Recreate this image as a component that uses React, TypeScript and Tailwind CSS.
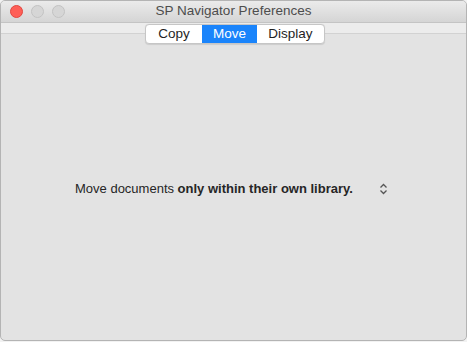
import React from "react";

const segments = ["Copy", "Move", "Display"];

function TrafficLights() {
  return (
    <div className="flex items-center gap-[8px] pl-[9px]">
      <span className="w-[13px] h-[13px] rounded-full bg-[#fe5f57] border border-[#e2463f]" />
      <span className="w-[13px] h-[13px] rounded-full bg-[#d6d6d6] border border-[#c2c2c2]" />
      <span className="w-[13px] h-[13px] rounded-full bg-[#d6d6d6] border border-[#c2c2c2]" />
    </div>
  );
}

export default function App() {
  return (
    <div
      className="w-[467px] h-[342px] bg-[#f2f2f2] overflow-hidden"
      style={{ fontFamily: '"Liberation Sans", Arial, sans-serif' }}
    >
      <div className="w-[467px] h-[341px] rounded-[5px] border border-[#b4b4b4] bg-[#e3e3e3] flex flex-col overflow-hidden">
        {/* title bar */}
        <div className="relative h-[22px] shrink-0 flex items-center bg-gradient-to-b from-[#ebebeb] to-[#d5d5d5] border-b border-[#c4c4c4]">
          <TrafficLights />
          <div className="absolute inset-0 flex items-center justify-center text-[13.5px] text-[#4d4d4d]">
            SP Navigator Preferences
          </div>
        </div>

        {/* toolbar band with tabs */}
        <div className="relative h-[11px] shrink-0 bg-[#ececec] border-b border-[#d2d2d2]">
          <div className="absolute left-[144px] top-[1px] flex h-[20px] rounded-[4px] border border-[#c6c6c6] bg-white overflow-hidden shadow-[0_0.5px_1px_rgba(0,0,0,0.1)]">
            {segments.map((s) => (
              <div
                key={s}
                className={
                  s === "Move"
                    ? "flex items-center justify-center h-full bg-[#1a84fb] text-white text-[13.5px] w-[55px]"
                    : s === "Copy"
                    ? "flex items-center justify-center h-full text-[#1f1f1f] text-[13.5px] w-[56px]"
                    : "flex items-center justify-center h-full text-[#1f1f1f] text-[13.5px] w-[67px]"
                }
              >
                {s}
              </div>
            ))}
          </div>
        </div>

        {/* content */}
        <div className="flex-1 flex items-center pl-[74px] pt-[3px]">
          <div className="flex items-center text-[13px] text-[#262626]">
            <span>Move documents&nbsp;</span>
            <span className="font-bold">only within their own library.</span>
            <svg className="ml-[26px]" width="9" height="12" viewBox="0 0 9 12" fill="none" stroke="#555" strokeWidth="1.3">
              <path d="M1.5 4.5 L4.5 1.5 L7.5 4.5" />
              <path d="M1.5 7.5 L4.5 10.5 L7.5 7.5" />
            </svg>
          </div>
        </div>
      </div>
    </div>
  );
}
